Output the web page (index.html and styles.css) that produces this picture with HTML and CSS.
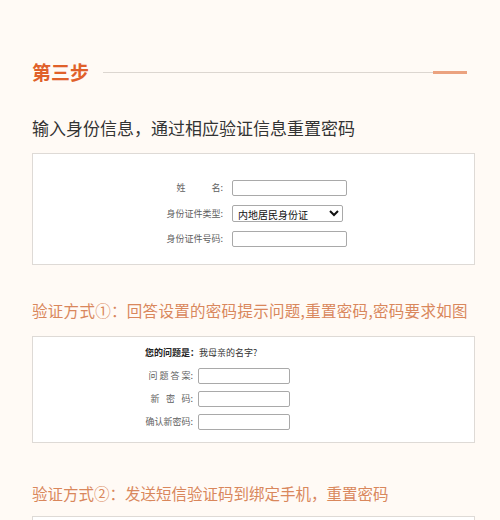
FILE: index.html
```html
<!DOCTYPE html>
<html lang="zh">
<head>
<meta charset="utf-8">
<link rel="stylesheet" href="styles.css">
</head>
<body>
<div class="page">
  <div class="step">
    <h1 class="step-title">第三步</h1>
    <div class="step-line"></div>
    <div class="step-accent"></div>
  </div>
  <p class="intro">输入身份信息，通过相应验证信息重置密码</p>
  <div class="panel panel-id">
    <div class="row">
      <label class="lbl lbl-id"><span class="ls-name">姓</span>名:</label>
      <input class="field field-id" type="text">
    </div>
    <div class="row">
      <label class="lbl lbl-id">身份证件类型:</label>
      <select class="field select-id"><option>内地居民身份证</option></select>
    </div>
    <div class="row">
      <label class="lbl lbl-id">身份证件号码:</label>
      <input class="field field-id" type="text">
    </div>
  </div>

  <h2 class="method method1">验证方式①：回答设置的密码提示问题,重置密码,密码要求如图</h2>
  <div class="panel panel-q">
    <div class="row row-q-top">
      <span class="q-label">您的问题是：</span>
      <span class="q-text">我母亲的名字?</span>
    </div>
    <div class="row">
      <label class="lbl lbl-q"><span class="ls-a">问题答</span>案:</label>
      <input class="field field-q" type="text">
    </div>
    <div class="row">
      <label class="lbl lbl-q"><span class="ls-b">新密</span>码:</label>
      <input class="field field-q" type="password">
    </div>
    <div class="row">
      <label class="lbl lbl-q">确认新密码:</label>
      <input class="field field-q" type="password">
    </div>
  </div>

  <h2 class="method method2">验证方式②：发送短信验证码到绑定手机，重置密码</h2>
  <div class="panel panel-sms"></div>
</div>
</body>
</html>
```
FILE: styles.css
```css
html, body {
  margin: 0;
  padding: 0;
  background: #fffaf5;
}
body {
  font-family: "Noto Sans CJK SC", "Noto Sans", sans-serif;
  color: #333;
}
.page {
  padding: 60px 25px 0 32px;
}
.step {
  display: flex;
  align-items: center;
  height: 24px;
}
.step-title {
  margin: 0;
  font-size: 19px;
  font-weight: bold;
  color: #e0602a;
  line-height: 24px;
}
.step-line {
  flex: 1;
  height: 1px;
  background: #dcd6d0;
  margin-left: 14px;
}
.step-accent {
  width: 34px;
  height: 3px;
  background: #eba27f;
  margin-right: 8px;
}
.intro {
  margin: 32px 0 0;
  font-size: 17px;
  line-height: 24px;
  color: #333;
}
.panel {
  background: #fff;
  border: 1px solid #dedad6;
  box-sizing: border-box;
  width: 443px;
}
.panel-id {
  margin-top: 13px;
  height: 112px;
  padding: 26px 0 0 130px;
  display: flex;
  flex-direction: column;
  gap: 9px;
}
.row {
  display: flex;
  align-items: center;
}
.lbl {
  font-size: 9px;
  color: #5e5e5e;
  text-align: right;
  line-height: 16px;
  white-space: nowrap;
  flex: none;
}
.lbl-id {
  width: 60px;
  margin-right: 9px;
}
.ls-name {
  letter-spacing: 26px;
}
.field {
  box-sizing: border-box;
  height: 16px;
  border: 1px solid #a9a9a9;
  border-radius: 2px;
  background: #fff;
  padding: 0 3px;
  font-family: inherit;
  font-size: 9px;
  color: #222;
  margin: 0;
  flex: none;
}
.field-id {
  width: 115px;
}
.select-id {
  width: 111px;
  height: 17px;
  padding: 0 1px;
  font-size: 10px;
  color: #111;
}
.method {
  margin: 34px 0 0;
  font-size: 15.5px;
  font-weight: normal;
  line-height: 22px;
  color: #d9875c;
}
.method1 {
  letter-spacing: 0.3px;
}
.method2 {
  margin-top: 39px;
}
.panel-q {
  margin-top: 15px;
  height: 107px;
  padding: 9px 0 0 110px;
  display: flex;
  flex-direction: column;
  gap: 7px;
}
.row-q-top {
  font-size: 9px;
  line-height: 14px;
  margin-bottom: 1px;
  margin-left: 2px;
  white-space: nowrap;
}
.q-label {
  font-weight: bold;
  color: #222;
}
.q-text {
  color: #333;
}
.lbl-q {
  width: 50px;
  margin-right: 5px;
}
.ls-a {
  letter-spacing: 2px;
}
.ls-b {
  letter-spacing: 6.5px;
}
.field-q {
  width: 92px;
}
.panel-sms {
  margin-top: 12px;
  height: 40px;
}
```
